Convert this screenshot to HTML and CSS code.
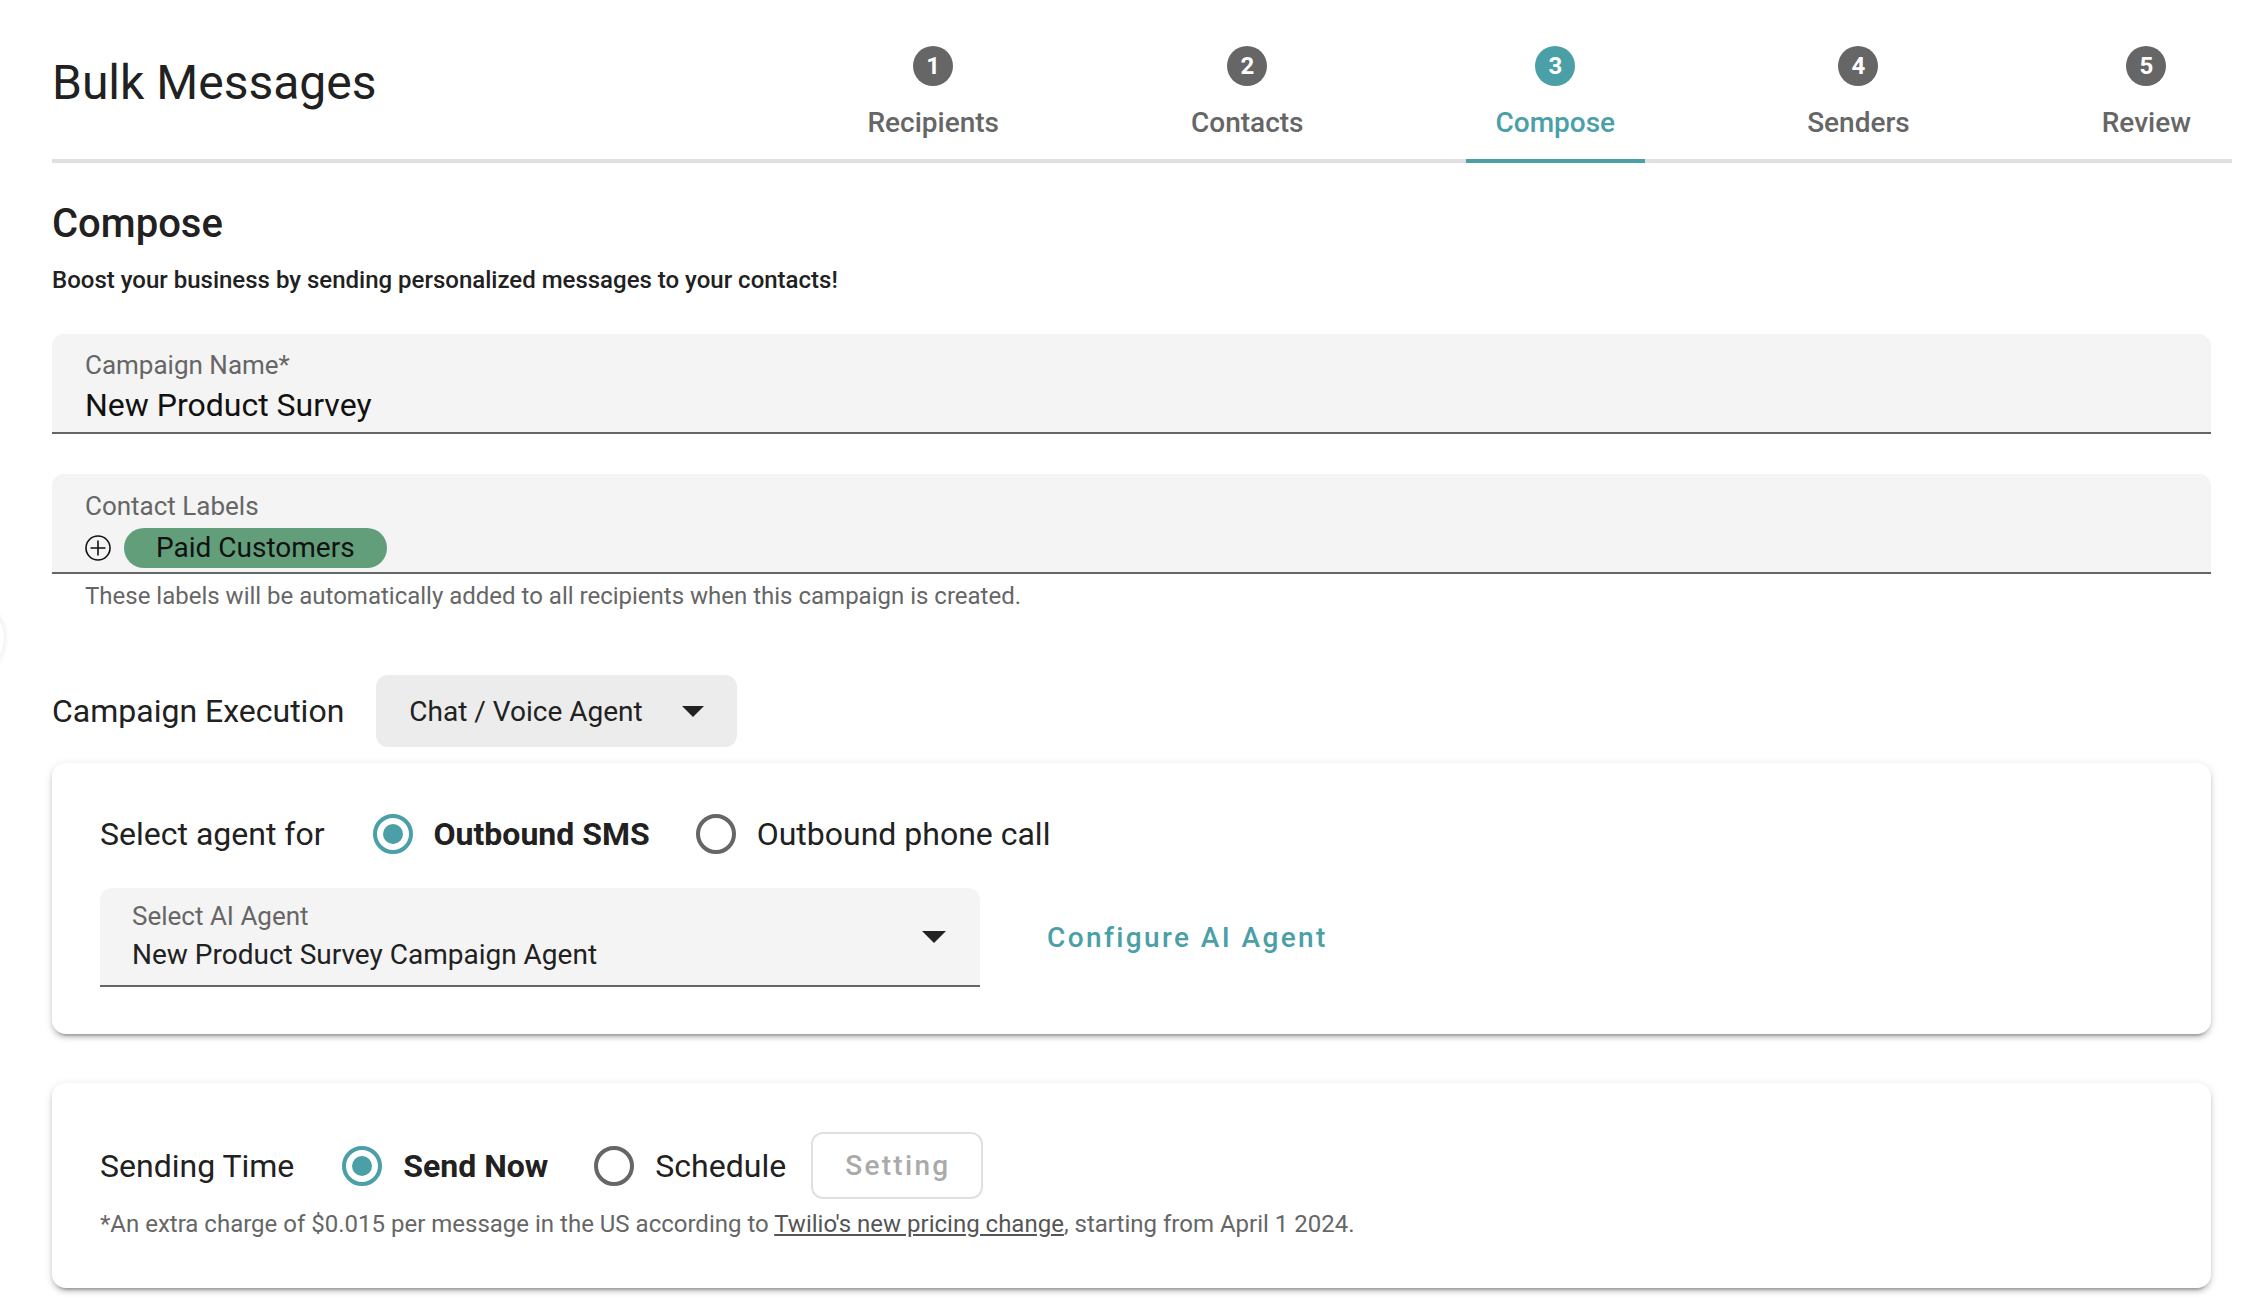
FILE: index.html
```html
<!DOCTYPE html>
<html lang="en">
<head>
<meta charset="utf-8">
<title>Bulk Messages</title>
<link rel="stylesheet" href="styles.css">
</head>
<body>
<div class="edge-handle" aria-hidden="true"></div>
<div class="page">
  <header class="topbar">
    <h1 class="app-title">Bulk Messages</h1>
    <nav class="steps">
      <div class="step"><span class="step-num">1</span><span class="step-label">Recipients</span></div>
      <div class="step"><span class="step-num">2</span><span class="step-label">Contacts</span></div>
      <div class="step active"><span class="step-num">3</span><span class="step-label">Compose</span></div>
      <div class="step"><span class="step-num">4</span><span class="step-label">Senders</span></div>
      <div class="step"><span class="step-num">5</span><span class="step-label">Review</span></div>
    </nav>
  </header>

  <main class="content">
    <h2 class="section-title">Compose</h2>
    <p class="section-sub">Boost your business by sending personalized messages to your contacts!</p>

    <div class="filled-field name-field">
      <div class="field-label">Campaign Name*</div>
      <div class="field-value">New Product Survey</div>
    </div>

    <div class="filled-field labels-field">
      <div class="field-label">Contact Labels</div>
      <div class="chip-row">
        <svg class="add-icon" width="26" height="26" viewBox="0 0 26 26"><circle cx="13" cy="13" r="12" fill="none" stroke="#111" stroke-width="1.6"/><path d="M13 5.5v15M5.5 13h15" stroke="#111" stroke-width="1.6"/></svg>
        <span class="chip">Paid Customers</span>
      </div>
    </div>
    <p class="helper">These labels will be automatically added to all recipients when this campaign is created.</p>

    <div class="exec-row">
      <span class="row-label">Campaign Execution</span>
      <div class="exec-select">
        <span>Chat / Voice Agent</span>
        <svg class="caret" width="22" height="11" viewBox="0 0 22 11"><path d="M0 0h22L11 11z" fill="#222"/></svg>
      </div>
    </div>

    <section class="card agent-card">
      <div class="option-row">
        <span class="row-label">Select agent for</span>
        <div class="radio-opt checked"><span class="radio"></span><span class="radio-text">Outbound SMS</span></div>
        <div class="radio-opt"><span class="radio"></span><span class="radio-text">Outbound phone call</span></div>
      </div>
      <div class="agent-row">
        <div class="filled-field select-field">
          <div class="select-text">
            <div class="field-label">Select AI Agent</div>
            <div class="select-value">New Product Survey Campaign Agent</div>
          </div>
          <svg class="caret" width="24" height="12" viewBox="0 0 24 12"><path d="M0 0h24L12 12z" fill="#222"/></svg>
        </div>
        <span class="text-btn">Configure AI Agent</span>
      </div>
    </section>

    <section class="card time-card">
      <div class="option-row">
        <span class="row-label">Sending Time</span>
        <div class="radio-opt checked"><span class="radio"></span><span class="radio-text">Send Now</span></div>
        <div class="radio-opt"><span class="radio"></span><span class="radio-text">Schedule</span></div>
        <span class="outline-btn">Setting</span>
      </div>
      <p class="footnote">*An extra charge of $0.015 per message in the US according to <span class="link">Twilio's new pricing change</span>, starting from April 1 2024.</p>
    </section>
  </main>
</div>
</body>
</html>
```

FILE: styles.css
```css
* { box-sizing: border-box; }

html, body {
  margin: 0;
  padding: 0;
  background: #ffffff;
}

body {
  font-family: Roboto, "Liberation Sans", Arial, sans-serif;
  color: #212121;
}

.page {
  padding: 46px 39px 20px 52px;
}

/* faint handle peeking in from the left edge */
.edge-handle {
  position: fixed;
  left: -48px;
  top: 606px;
  width: 52px;
  height: 64px;
  border-radius: 50%;
  background: #ffffff;
  box-shadow: 0 0 6px rgba(0,0,0,0.12);
}

/* ---------- header / stepper ---------- */
.topbar {
  display: flex;
  justify-content: space-between;
  align-items: flex-start;
  margin-right: -21px;
  border-bottom: 4px solid #e0e0e0;
}

.app-title {
  margin: 9px 0 0;
  font-size: 48px;
  line-height: 56px;
  font-weight: 400;
  color: #212121;
}

.steps {
  display: flex;
  gap: 132px;
  margin-right: 11px;
}

.step {
  display: flex;
  flex-direction: column;
  align-items: center;
  padding: 0 30px 20px;
  margin-bottom: -4px;
  border-bottom: 4px solid transparent;
}

.step-num {
  width: 40px;
  height: 40px;
  border-radius: 50%;
  background: #666666;
  color: #ffffff;
  font-size: 24px;
  font-weight: 700;
  line-height: 40px;
  text-align: center;
}

.step-label {
  margin-top: 21px;
  font-size: 28px;
  line-height: 32px;
  font-weight: 500;
  color: #666666;
}

.step.active { border-bottom-color: #4aa0a6; }
.step.active .step-num { background: #4aa0a6; }
.step.active .step-label { color: #4aa0a6; }

/* ---------- content ---------- */
.section-title {
  margin: 37px 0 0;
  font-size: 40px;
  line-height: 48px;
  font-weight: 500;
}

.section-sub {
  margin: 18px 0 0;
  font-size: 24px;
  line-height: 28px;
  font-weight: 500;
}

.filled-field {
  background: #f4f4f4;
  border-radius: 12px 12px 0 0;
  border-bottom: 2px solid #666666;
}

.field-label {
  font-size: 26px;
  line-height: 30px;
  color: #666666;
}

.name-field {
  margin-top: 40px;
  padding: 16px 33px 8px;
}

.field-value {
  margin-top: 6px;
  font-size: 32px;
  line-height: 38px;
  color: #111111;
}

.labels-field {
  margin-top: 40px;
  padding: 17px 33px 4px;
}

.chip-row {
  margin-top: 7px;
  display: flex;
  align-items: center;
  gap: 13px;
  height: 40px;
}

.add-icon { display: block; }

.chip {
  height: 40px;
  padding: 0 32px 0 32px;
  border-radius: 20px;
  background: #639e7b;
  color: #111111;
  font-size: 28px;
  line-height: 40px;
}

.helper {
  margin: 8px 0 0 33px;
  font-size: 24px;
  line-height: 28px;
  color: #666666;
}

.exec-row {
  margin-top: 65px;
  display: flex;
  align-items: center;
  gap: 32px;
}

.row-label {
  font-size: 32px;
  line-height: 40px;
  color: #212121;
}

.exec-select {
  height: 72px;
  padding: 0 33px;
  display: flex;
  align-items: center;
  gap: 39px;
  background: #ececec;
  border-radius: 12px;
  font-size: 28px;
  color: #212121;
}

.caret { display: block; }

/* ---------- cards ---------- */
.card {
  background: #ffffff;
  border-radius: 14px;
  box-shadow: 0 6px 2px -4px rgba(0,0,0,0.2), 0 4px 4px 0 rgba(0,0,0,0.14), 0 2px 10px 0 rgba(0,0,0,0.12);
}

.agent-card {
  margin-top: 16px;
  padding: 51px 48px 47px;
}

.time-card {
  margin-top: 49px;
  padding: 49px 48px 50px;
}

.option-row {
  display: flex;
  align-items: center;
  min-height: 40px;
}

.option-row .row-label { margin-right: 48px; }

.radio-opt {
  display: flex;
  align-items: center;
  gap: 21px;
  margin-right: 46px;
}

.radio {
  width: 40px;
  height: 40px;
  border-radius: 50%;
  border: 4px solid #666666;
  display: flex;
  align-items: center;
  justify-content: center;
}

.radio-opt.checked .radio { border-color: #4aa0a6; }
.radio-opt.checked .radio::after {
  content: "";
  width: 20px;
  height: 20px;
  border-radius: 50%;
  background: #4aa0a6;
}

.radio-text {
  font-size: 32px;
  line-height: 40px;
  color: #212121;
}

.radio-opt.checked .radio-text { font-weight: 700; }

.agent-row {
  margin-top: 34px;
  display: flex;
  align-items: center;
  gap: 67px;
}

.select-field {
  width: 880px;
  padding: 13px 34px 13px 32px;
  display: flex;
  align-items: center;
  justify-content: space-between;
}

.select-value {
  margin-top: 7px;
  font-size: 28px;
  line-height: 34px;
  color: #212121;
}

.text-btn {
  font-size: 28px;
  font-weight: 500;
  letter-spacing: 2.4px;
  color: #4aa0a6;
}

.outline-btn {
  margin-left: -21px;
  height: 67px;
  padding: 0 31px 0 32px;
  display: flex;
  align-items: center;
  border: 2px solid #e0e0e0;
  border-radius: 12px;
  font-size: 28px;
  font-weight: 500;
  letter-spacing: 2.3px;
  color: #aaaaaa;
}

.footnote {
  margin: 11px 0 0;
  font-size: 24px;
  line-height: 28px;
  color: #666666;
}

.link {
  text-decoration: underline;
  color: #555555;
}
```
